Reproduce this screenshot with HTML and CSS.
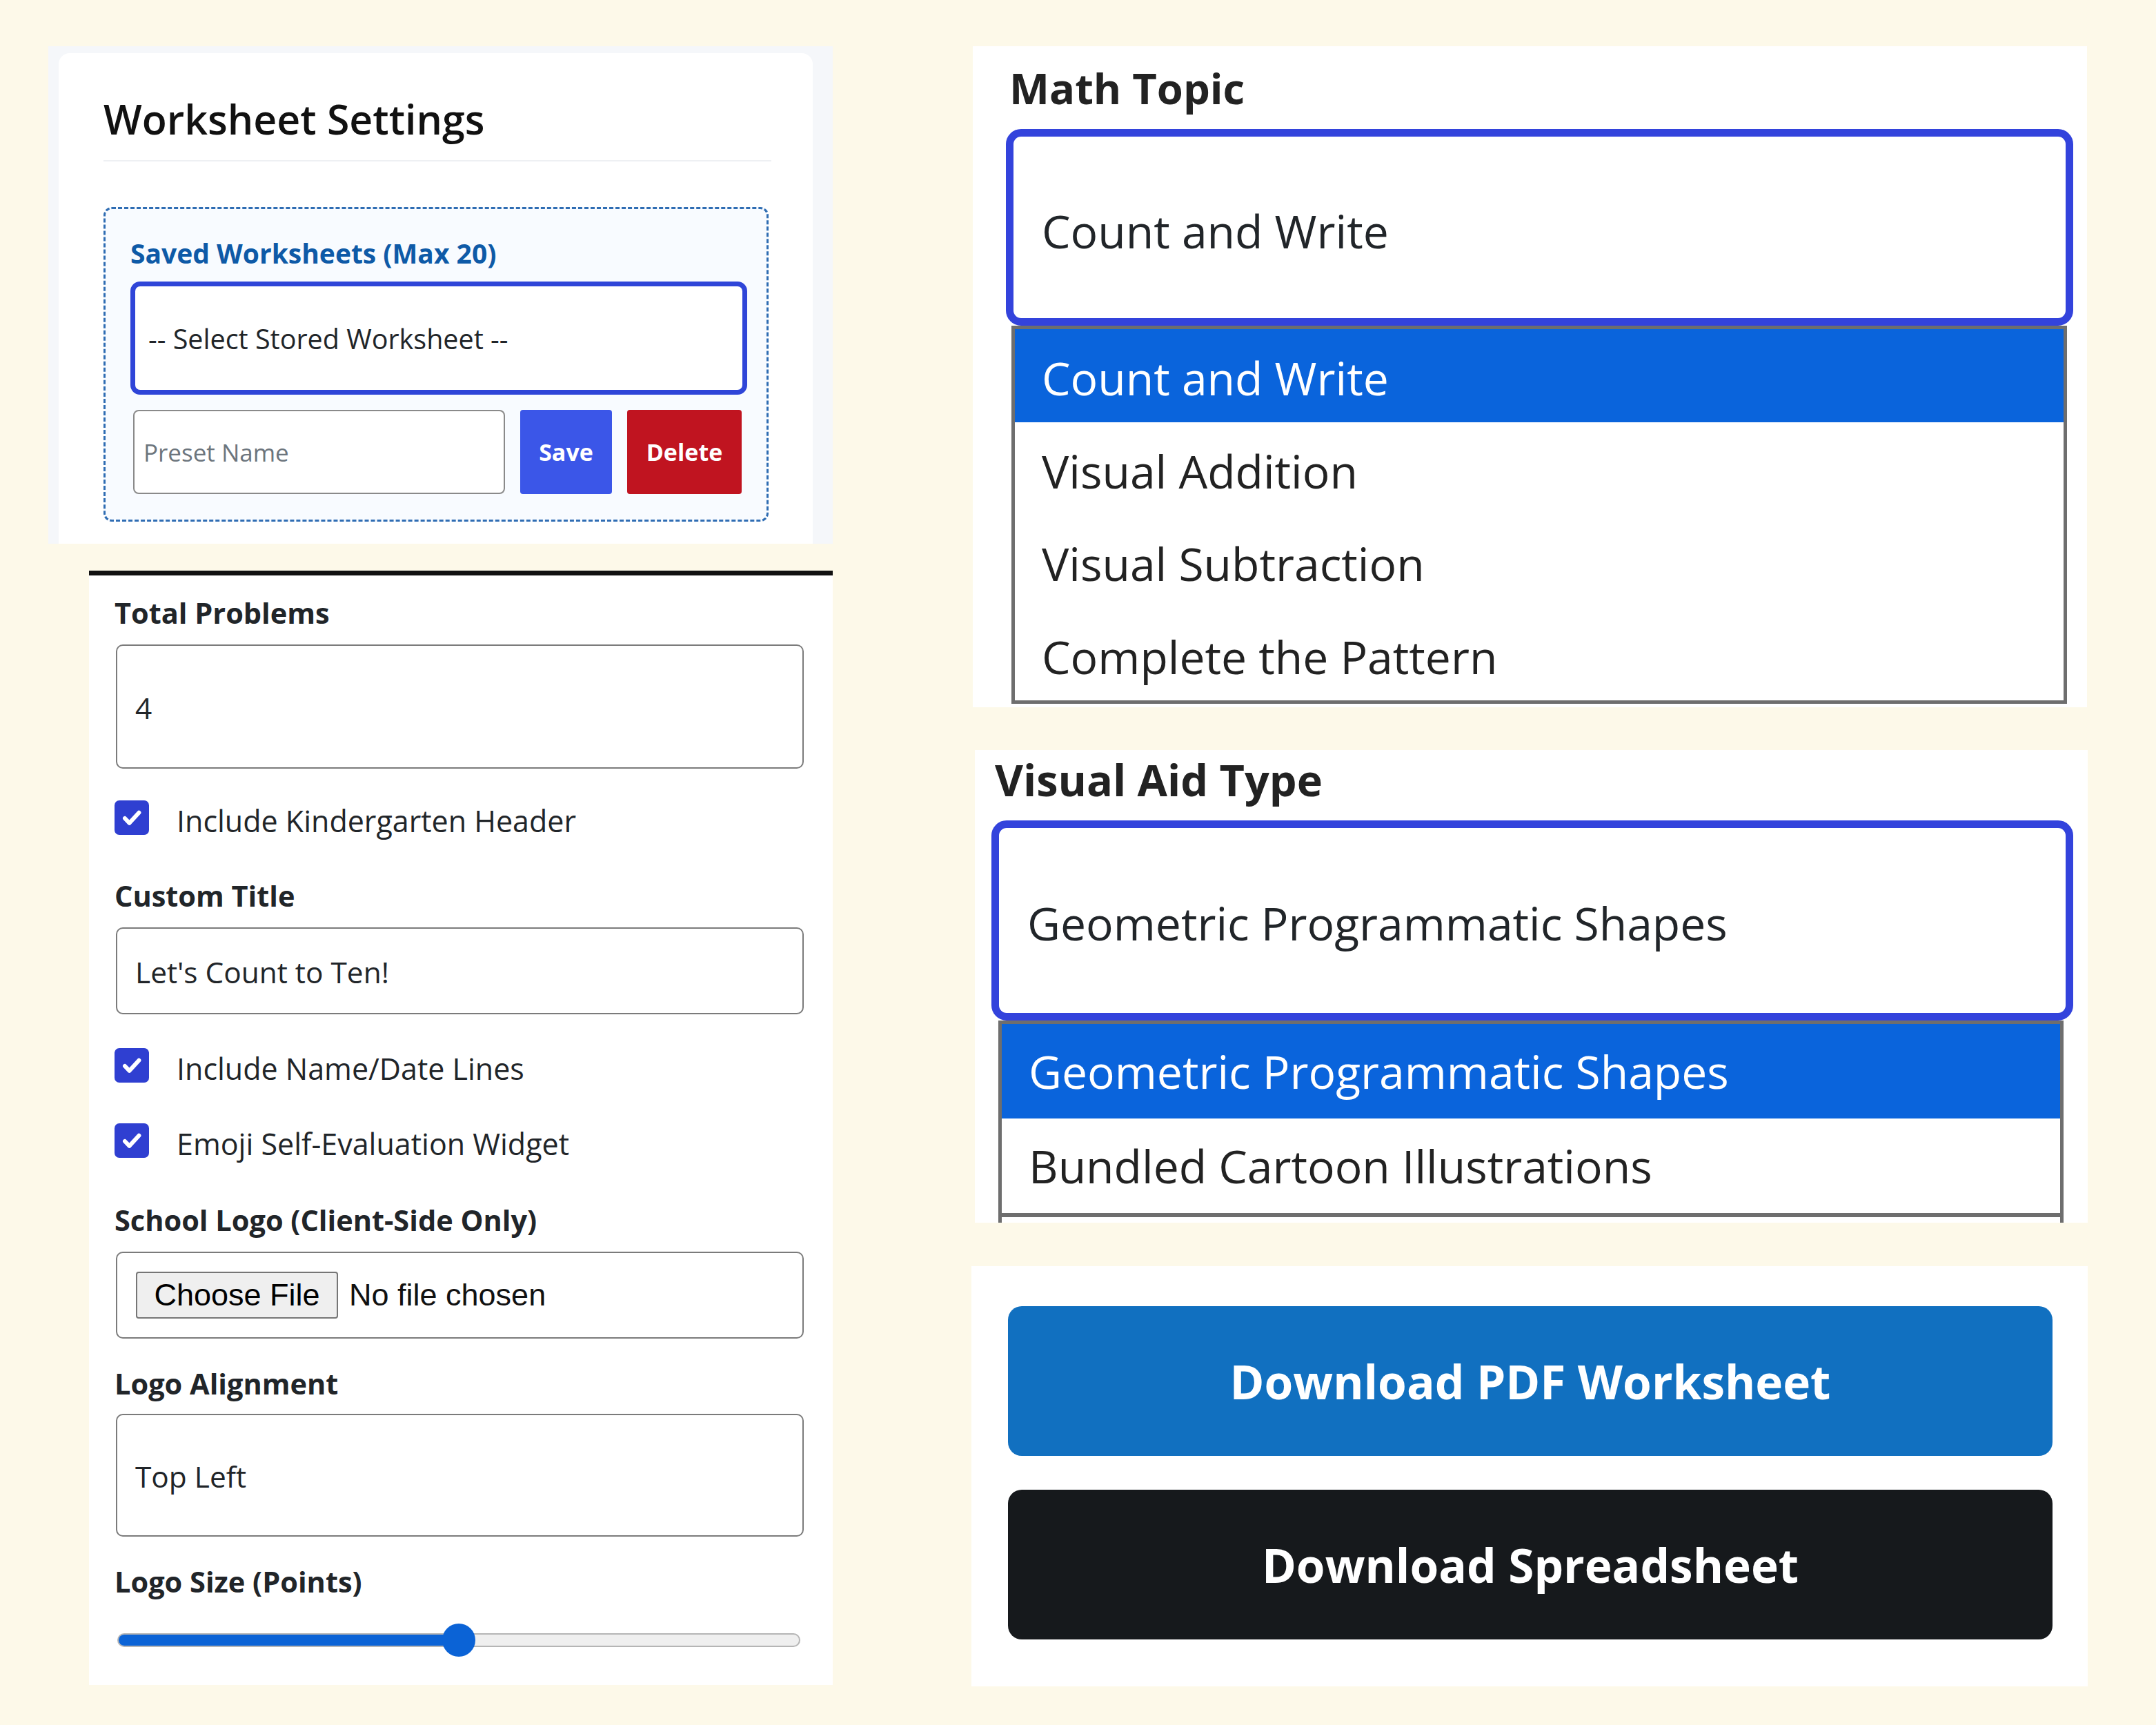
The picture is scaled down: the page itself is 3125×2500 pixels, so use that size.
FILE: index.html
```html
<!DOCTYPE html>
<html>

<head>
  <title>Worksheet Generator</title>
  <link rel="stylesheet" href="styles.css">
</head>

<body>
  <div class="canvas">
    <div class="left-col">
      <div class="settings-card">
        <div class="settings-inner">
          <h2 class="settings-title">Worksheet Settings</h2>
          <div class="preset-box">
            <div class="preset-label">Saved Worksheets (Max 20)</div>
            <div class="preset-select">-- Select Stored Worksheet --</div>
            <div class="preset-row">
              <div class="preset-name">Preset Name</div>
              <div class="btn-small btn-save">Save</div>
              <div class="btn-small btn-delete">Delete</div>
            </div>
          </div>
        </div>
      </div>

      <div class="form-panel">
        <div class="field-label">Total Problems</div>
        <div class="text-box box-tall g-22">4</div>

        <div class="check-row g-46">
          <span class="check"><svg viewBox="0 0 20 20"><path d="M5 10.5l3.3 3.4L15.2 6.4" /></svg></span>
          <span class="check-text">Include Kindergarten Header</span>
        </div>

        <div class="field-label g-64">Custom Title</div>
        <div class="text-box box-short g-22">Let's Count to Ten!</div>

        <div class="check-row g-49">
          <span class="check"><svg viewBox="0 0 20 20"><path d="M5 10.5l3.3 3.4L15.2 6.4" /></svg></span>
          <span class="check-text">Include Name/Date Lines</span>
        </div>
        <div class="check-row g-59">
          <span class="check"><svg viewBox="0 0 20 20"><path d="M5 10.5l3.3 3.4L15.2 6.4" /></svg></span>
          <span class="check-text">Emoji Self-Evaluation Widget</span>
        </div>

        <div class="field-label g-66">School Logo (Client-Side Only)</div>
        <div class="text-box box-short file-box g-22">
          <span class="file-btn">Choose File</span>
          <span class="file-name">No file chosen</span>
        </div>

        <div class="field-label g-41">Logo Alignment</div>
        <div class="text-box box-select g-20">Top Left</div>

        <div class="field-label g-41">Logo Size (Points)</div>
        <div class="range g-37">
          <div class="range-track">
            <div class="range-fill" style="width: 50%"></div>
          </div>
          <div class="range-thumb" style="left: 50%"></div>
        </div>
      </div>
    </div>

    <div class="right-col">
      <div class="pick-panel topic-panel">
        <div class="pick-label">Math Topic</div>
        <div class="pick-select">Count and Write</div>
        <ul class="pick-list">
          <li class="active">Count and Write</li>
          <li>Visual Addition</li>
          <li>Visual Subtraction</li>
          <li>Complete the Pattern</li>
        </ul>
      </div>

      <div class="pick-panel aid-panel">
        <div class="pick-label">Visual Aid Type</div>
        <div class="pick-select">Geometric Programmatic Shapes</div>
        <ul class="pick-list">
          <li class="active">Geometric Programmatic Shapes</li>
          <li>Bundled Cartoon Illustrations</li>
          <li class="more"></li>
        </ul>
      </div>

      <div class="download-panel">
        <div class="btn-big btn-pdf">Download PDF Worksheet</div>
        <div class="btn-big btn-sheet">Download Spreadsheet</div>
      </div>
    </div>
  </div>
</body>

</html>
```

FILE: styles.css
```css
body {
  margin: 0;
  background-color: #fdf9e9;
  font-family: "Open Sans", "Noto Sans", sans-serif;
  color: #212529;
}

.canvas {
  display: flex;
  gap: 201px;
  padding: 67px 0 0 70px;
}

/* left column */

.left-col {
  width: 1137px;
  display: flex;
  flex-direction: column;
}

.settings-card {
  height: 721px;
  box-sizing: border-box;
  padding: 10px 29px 0 15px;
  background-color: #f5f7fa;
}

.settings-inner {
  height: 100%;
  box-sizing: border-box;
  padding: 61px 60px 0 65px;
  background-color: #fff;
  border-radius: 16px 16px 0 0;
}

.settings-title {
  margin: 0;
  padding-bottom: 26px;
  font-size: 59px;
  font-weight: 600;
  line-height: 68px;
  color: #111;
  border-bottom: 2px solid #eef0f3;
}

.preset-box {
  margin: 66px 4px 0 0;
  padding: 39px 28px 37px 36px;
  background-color: #f8fbff;
  border: 3px dashed #2f6db3;
  border-radius: 12px;
}

.preset-label {
  font-size: 39px;
  font-weight: 700;
  line-height: 49px;
  color: #0e5aa7;
}

.preset-select {
  height: 164px;
  box-sizing: border-box;
  margin-top: 17px;
  padding: 2px 0 0 19px;
  border: 7px solid #2f45d8;
  border-radius: 14px;
  background-color: #fff;
  display: flex;
  align-items: center;
  font-size: 39.5px;
}

.preset-row {
  display: flex;
  gap: 22px;
  height: 122px;
  margin: 22px 8px 0 4px;
}

.preset-name {
  flex: 1;
  display: flex;
  align-items: center;
  padding-left: 13px;
  border: 2px solid #8a8a8a;
  border-radius: 8px;
  background-color: #fff;
  font-size: 35px;
  color: #6c757d;
}

.btn-small {
  display: flex;
  align-items: center;
  justify-content: center;
  border-radius: 4px;
  font-size: 34px;
  font-weight: 700;
  color: #fff;
}

.btn-save {
  width: 133px;
  background-color: #3b56e8;
}

.btn-delete {
  width: 166px;
  background-color: #c01420;
}

.form-panel {
  height: 1615px;
  width: 1078px;
  box-sizing: border-box;
  margin: 39px 0 0 59px;
  padding: 30px 42px 0 37px;
  background-color: #fff;
  border-top: 7px solid #111;
}

.field-label {
  font-size: 41.5px;
  font-weight: 700;
  line-height: 48px;
}

.text-box {
  box-sizing: border-box;
  margin-left: 2px;
  padding: 3px 0 0 26px;
  display: flex;
  align-items: center;
  border: 2px solid #7b7b7b;
  border-radius: 10px;
  font-size: 42.4px;
}

.box-tall {
  height: 180px;
}

.box-short {
  height: 126px;
}

.box-select {
  height: 178px;
}

.g-20 { margin-top: 20px; }
.g-22 { margin-top: 22px; }
.g-37 { margin-top: 37px; }
.g-41 { margin-top: 41px; }
.g-46 { margin-top: 46px; }
.g-49 { margin-top: 49px; }
.g-59 { margin-top: 59px; }
.g-64 { margin-top: 64px; }
.g-66 { margin-top: 66px; }

.check-row {
  display: flex;
  align-items: flex-start;
  gap: 40px;
  height: 50px;
}

.check {
  width: 50px;
  height: 50px;
  border-radius: 7px;
  background-color: #2f3fd1;
  display: flex;
  align-items: center;
  justify-content: center;
}

.check svg {
  width: 40px;
  height: 40px;
  fill: none;
  stroke: #fff;
  stroke-width: 3;
  stroke-linecap: round;
  stroke-linejoin: round;
}

.check-text {
  margin-top: 5px;
  font-size: 43px;
  line-height: 50px;
}

.file-box {
  padding: 0 0 0 27px;
  font-family: "Liberation Sans", Arial, sans-serif;
  font-size: 45px;
}

.file-btn {
  width: 293px;
  height: 68px;
  box-sizing: border-box;
  display: flex;
  align-items: center;
  justify-content: center;
  background-color: #efefef;
  border: 2px solid #767676;
  border-radius: 4px;
  color: #000;
}

.file-name {
  margin-left: 16px;
  color: #111;
}

.range {
  position: relative;
  width: 990px;
  height: 48px;
  margin-left: 4px;
  display: flex;
  align-items: center;
}

.range-track {
  flex: 1;
  height: 20px;
  box-sizing: border-box;
  border: 2px solid #b5b5b5;
  border-radius: 10px;
  background-color: #efefef;
  overflow: hidden;
}

.range-fill {
  height: 100%;
  background-color: #0b63d6;
}

.range-thumb {
  position: absolute;
  top: 0;
  width: 48px;
  height: 48px;
  margin-left: -24px;
  border-radius: 50%;
  background-color: #0b63d6;
}

/* right column */

.right-col {
  width: 1618px;
  display: flex;
  flex-direction: column;
}

.pick-panel {
  background-color: #fff;
  box-sizing: border-box;
  overflow: hidden;
}

.topic-panel {
  width: 1615px;
  height: 958px;
  margin-left: 2px;
  padding-top: 25px;
}

.aid-panel {
  width: 1613px;
  height: 685px;
  margin: 62px 0 0 5px;
  padding-top: 7px;
}

.pick-label {
  font-size: 61.5px;
  font-weight: 700;
  line-height: 71px;
  color: #222;
}

.pick-select {
  box-sizing: border-box;
  margin-top: 24px;
  padding-left: 41px;
  display: flex;
  align-items: center;
  border: 11px solid #3343dc;
  border-radius: 22px;
  font-size: 66px;
}

.pick-list {
  list-style: none;
  margin: 0;
  padding: 0;
  border: 5px solid #6e6e6e;
  font-size: 66px;
  color: #222;
}

.pick-list li {
  padding-left: 39px;
  white-space: nowrap;
}

.pick-list li.active {
  background-color: #0a64dc;
  color: #fff;
}

.topic-panel .pick-label {
  margin-left: 53px;
}

.topic-panel .pick-select {
  width: 1547px;
  height: 285px;
  margin-left: 48px;
  padding-top: 8px;
}

.topic-panel .pick-list {
  width: 1530px;
  margin-left: 56px;
  box-sizing: border-box;
}

.topic-panel .pick-list li {
  height: 134.5px;
  box-sizing: border-box;
  padding-top: 6px;
  line-height: 128.5px;
}

.aid-panel .pick-label {
  margin-left: 29px;
  font-size: 63px;
}

.aid-panel .pick-select {
  width: 1568px;
  height: 290px;
  margin-left: 24px;
  padding-top: 5px;
}

.aid-panel .pick-list {
  width: 1544px;
  margin-left: 34px;
  box-sizing: border-box;
  border-bottom: 0;
}

.aid-panel .pick-list li {
  height: 137px;
  line-height: 136px;
}

.aid-panel .pick-list li.more {
  height: 40px;
  border-top: 6px solid #6e6e6e;
}

.download-panel {
  width: 1618px;
  height: 609px;
  box-sizing: border-box;
  margin-top: 63px;
  padding: 58px 51px 0 53px;
  background-color: #fff;
}

.btn-big {
  height: 217px;
  display: flex;
  align-items: center;
  justify-content: center;
  border-radius: 20px;
  font-size: 67.5px;
  font-weight: 700;
  color: #fff;
}

.btn-pdf {
  background-color: #1170c0;
}

.btn-sheet {
  margin-top: 49px;
  background-color: #16191c;
}
```
